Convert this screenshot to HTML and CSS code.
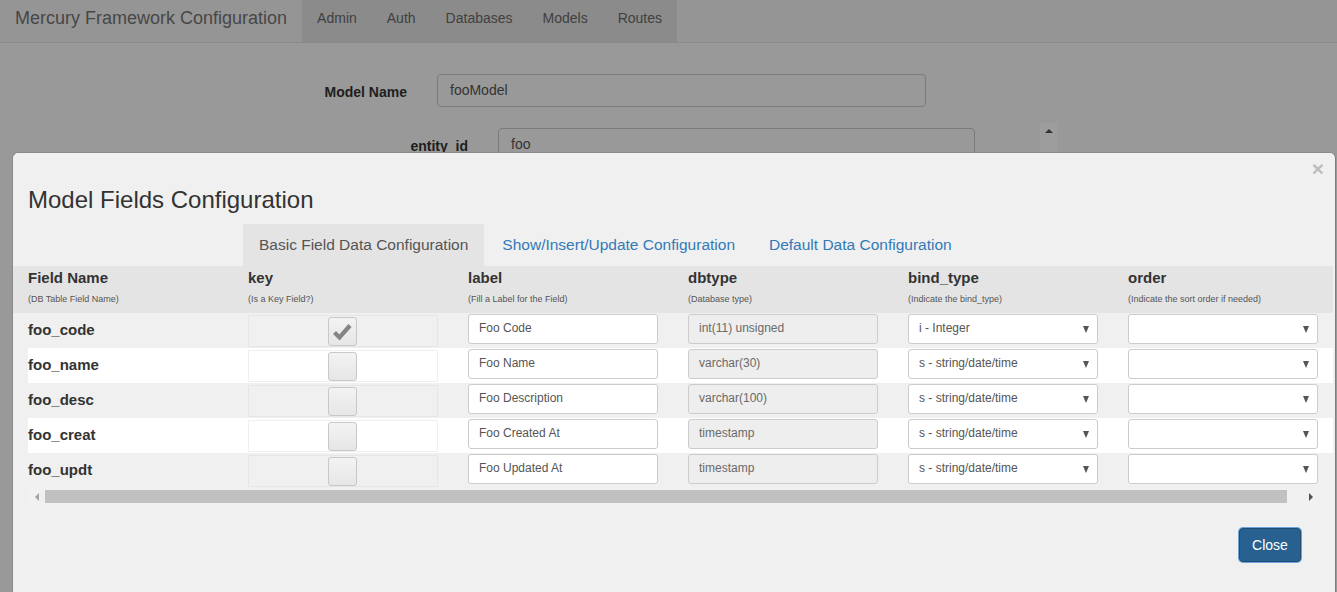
FILE: index.html
```html
<!DOCTYPE html>
<html lang="en">
<head>
<meta charset="utf-8">
<title>Mercury Framework Configuration</title>
<link rel="stylesheet" href="styles.css">
</head>
<body>
<nav class="navbar">
  <span class="brand">Mercury Framework Configuration</span>
  <ul class="nav">
    <li>Admin</li>
    <li>Auth</li>
    <li>Databases</li>
    <li>Models</li>
    <li>Routes</li>
  </ul>
</nav>

<main class="page">
  <div class="form-row row-model">
    <label class="form-label">Model Name</label>
    <div class="fake-input input-model">fooModel</div>
  </div>
  <div class="form-row row-entity">
    <label class="form-label">entity_id</label>
    <div class="fake-input input-entity">foo</div>
    <div class="vscroll"><span class="vs-arrow"></span></div>
  </div>
</main>

<div class="modal">
  <button class="close-x" type="button">×</button>
  <h4 class="modal-title">Model Fields Configuration</h4>
  <ul class="tabs">
    <li class="tab active">Basic Field Data Configuration</li>
    <li class="tab">Show/Insert/Update Configuration</li>
    <li class="tab">Default Data Configuration</li>
  </ul>

  <div class="grid-head">
    <div class="hcell first"><div class="htitle">Field Name</div><div class="hsub">(DB Table Field Name)</div></div>
    <div class="hcell"><div class="htitle">key</div><div class="hsub">(Is a Key Field?)</div></div>
    <div class="hcell"><div class="htitle">label</div><div class="hsub">(Fill a Label for the Field)</div></div>
    <div class="hcell"><div class="htitle">dbtype</div><div class="hsub">(Database type)</div></div>
    <div class="hcell"><div class="htitle">bind_type</div><div class="hsub">(Indicate the bind_type)</div></div>
    <div class="hcell"><div class="htitle">order</div><div class="hsub">(Indicate the sort order if needed)</div></div>
  </div>

  <div class="rows">
    <div class="row">
      <div class="cell first fname">foo_code</div>
      <div class="cell"><div class="keybox"><span class="check checked"><svg viewBox="0 0 29 29" width="29" height="29"><path d="M6.5 15.5 L11.5 20.5 L22 8.5" fill="none" stroke="#858585" stroke-width="4.2" stroke-linejoin="miter"/></svg></span></div></div>
      <div class="cell"><div class="ctl">Foo Code</div></div>
      <div class="cell"><div class="ctl disabled">int(11) unsigned</div></div>
      <div class="cell"><div class="ctl select">i - Integer<span class="caret"></span></div></div>
      <div class="cell"><div class="ctl select"><span class="caret"></span></div></div>
    </div>
    <div class="row even">
      <div class="cell first fname">foo_name</div>
      <div class="cell"><div class="keybox"><span class="check"></span></div></div>
      <div class="cell"><div class="ctl">Foo Name</div></div>
      <div class="cell"><div class="ctl disabled">varchar(30)</div></div>
      <div class="cell"><div class="ctl select">s - string/date/time<span class="caret"></span></div></div>
      <div class="cell"><div class="ctl select"><span class="caret"></span></div></div>
    </div>
    <div class="row">
      <div class="cell first fname">foo_desc</div>
      <div class="cell"><div class="keybox"><span class="check"></span></div></div>
      <div class="cell"><div class="ctl">Foo Description</div></div>
      <div class="cell"><div class="ctl disabled">varchar(100)</div></div>
      <div class="cell"><div class="ctl select">s - string/date/time<span class="caret"></span></div></div>
      <div class="cell"><div class="ctl select"><span class="caret"></span></div></div>
    </div>
    <div class="row even">
      <div class="cell first fname">foo_creat</div>
      <div class="cell"><div class="keybox"><span class="check"></span></div></div>
      <div class="cell"><div class="ctl">Foo Created At</div></div>
      <div class="cell"><div class="ctl disabled">timestamp</div></div>
      <div class="cell"><div class="ctl select">s - string/date/time<span class="caret"></span></div></div>
      <div class="cell"><div class="ctl select"><span class="caret"></span></div></div>
    </div>
    <div class="row">
      <div class="cell first fname">foo_updt</div>
      <div class="cell"><div class="keybox"><span class="check"></span></div></div>
      <div class="cell"><div class="ctl">Foo Updated At</div></div>
      <div class="cell"><div class="ctl disabled">timestamp</div></div>
      <div class="cell"><div class="ctl select">s - string/date/time<span class="caret"></span></div></div>
      <div class="cell"><div class="ctl select"><span class="caret"></span></div></div>
    </div>
  </div>

  <div class="hscroll">
    <span class="hs-btn"><span class="hs-left"></span></span>
    <span class="hs-thumb"></span>
    <span class="hs-rest"></span>
    <span class="hs-btn"><span class="hs-right"></span></span>
  </div>

  <div class="modal-footer">
    <button class="btn-close" type="button">Close</button>
  </div>
</div>
</body>
</html>
```

FILE: styles.css
```css
* { box-sizing: border-box; }

html, body {
  margin: 0;
  padding: 0;
  height: 100%;
  overflow: hidden;
}

body {
  background: #999999;
  font-family: "Liberation Sans", Arial, Helvetica, sans-serif;
  font-size: 14px;
  color: #1f1f1f;
}

/* ---------- dimmed background page ---------- */
.navbar {
  display: flex;
  align-items: stretch;
  height: 43px;
  background: #959595;
  border-bottom: 1px solid #8a8a8a;
}

.brand {
  padding: 0 15px;
  font-size: 18px;
  line-height: 36px;
  color: #474747;
}

.nav {
  list-style: none;
  margin: 0;
  padding: 0;
  display: flex;
  background: #8b8b8b;
}

.nav li {
  padding: 8px 15px 0;
  line-height: 20px;
  font-size: 14px;
  color: #404040;
}

.page {
  padding-top: 31px;
}

.form-row {
  display: flex;
  align-items: flex-start;
  gap: 30px;
}

.row-entity {
  margin-top: 21px;
}

.form-label {
  font-weight: bold;
  text-align: right;
  line-height: 33px;
  height: 33px;
  padding-top: 2px;
  color: #1e1e1e;
}

.row-model .form-label { width: 407px; }
.row-entity .form-label { width: 468px; }

.fake-input {
  height: 33px;
  border: 1px solid #7b7b7b;
  border-radius: 4px;
  padding: 0 12px;
  line-height: 31px;
  color: #333;
}

.input-model { width: 489px; }
.input-entity { width: 477px; }

.vscroll {
  margin-left: 35px;
  margin-top: -5px;
  width: 17px;
  height: 60px;
  background: #9d9d9d;
  display: flex;
  justify-content: center;
  padding-top: 6px;
}

.vs-arrow {
  width: 0;
  height: 0;
  border-left: 4px solid transparent;
  border-right: 4px solid transparent;
  border-bottom: 4px solid #333;
}

/* ---------- modal ---------- */
.modal {
  position: fixed;
  left: 12px;
  top: 152px;
  width: 1324px;
  height: 470px;
  background: #f0f0f0;
  border: 1px solid #8a8a8a;
  border-right-color: #7d7d7d;
  border-radius: 6px;
}

.close-x {
  position: absolute;
  right: 11px;
  top: 4px;
  background: none;
  border: 0;
  padding: 0;
  font-family: "Liberation Sans", Arial, sans-serif;
  font-size: 21px;
  font-weight: bold;
  line-height: 24px;
  color: #bdbdbd;
}

.modal-title {
  margin: 33px 0 0;
  padding-left: 15px;
  font-size: 24px;
  font-weight: normal;
  line-height: 28px;
  color: #333;
}

.tabs {
  list-style: none;
  margin: 10px 0 0 230px;
  padding: 0;
  display: flex;
}

.tab {
  padding: 10px 16px;
  margin-right: 2px;
  font-size: 15.5px;
  line-height: 22px;
  color: #337ab7;
}

.tab.active {
  background: #e4e4e4;
  color: #555;
}

.grid-head {
  display: grid;
  grid-template-columns: repeat(6, 220px);
  width: 1320px;
  background: #e4e4e4;
  padding: 2px 0 8px;
}

.hcell {
  padding: 0 15px;
}

.htitle {
  font-size: 15px;
  font-weight: bold;
  line-height: 20px;
  color: #333;
}

.hsub {
  margin-top: 5px;
  font-size: 9px;
  line-height: 12px;
  color: #555;
}

.rows {
  margin-left: 15px;
  width: 1305px;
}

.row {
  display: grid;
  grid-template-columns: 205px repeat(5, 220px);
  height: 35px;
  padding-top: 0;
}

.row.even {
  background: #ffffff;
}

.cell {
  padding: 0 15px;
}

.cell.first {
  padding-left: 0;
}

.fname {
  font-size: 15px;
  font-weight: bold;
  line-height: 33px;
  color: #333;
}

.keybox {
  margin-top: 2px;
  height: 32px;
  border: 1px solid #e6e6e6;
  background: #f0f0f0;
  display: flex;
  justify-content: center;
  padding-top: 1px;
}

.row.even .keybox {
  background: #ffffff;
  border-color: #efefef;
}

.check {
  display: block;
  width: 29px;
  height: 29px;
  border: 1px solid #c8c8c8;
  border-radius: 3px;
  background: linear-gradient(#f3f3f3, #e6e6e6);
  margin-left: -1px;
}

.check svg {
  display: block;
  margin: -1px 0 0 -1px;
}

.ctl {
  position: relative;
  margin-top: 1px;
  height: 30px;
  border: 1px solid #cccccc;
  border-radius: 3px;
  background: #ffffff;
  padding: 0 10px;
  font-size: 12px;
  line-height: 27px;
  color: #555;
  white-space: nowrap;
}

.ctl.disabled {
  background: #eeeeee;
  color: #6a6a6a;
}

.caret {
  position: absolute;
  right: 8px;
  top: 11px;
  width: 0;
  height: 0;
  border-left: 3px solid transparent;
  border-right: 3px solid transparent;
  border-top: 7px solid #555;
}

/* fake horizontal scrollbar */
.hscroll {
  display: flex;
  margin: 0 0 0 15px;
  width: 1291px;
  height: 17px;
  background: #f1f1f1;
}

.hs-btn {
  width: 17px;
  height: 17px;
  display: flex;
  align-items: center;
  justify-content: center;
}

.hs-left {
  width: 0;
  height: 0;
  border-top: 4px solid transparent;
  border-bottom: 4px solid transparent;
  border-right: 4px solid #a3a3a3;
}

.hs-right {
  width: 0;
  height: 0;
  border-top: 4px solid transparent;
  border-bottom: 4px solid transparent;
  border-left: 4px solid #505050;
}

.hs-thumb {
  width: 1242px;
  margin: 2px 0;
  background: #c1c1c1;
}

.hs-rest {
  flex: 1;
}

.modal-footer {
  display: flex;
  justify-content: flex-end;
  padding: 23px 34px 0 0;
}

.btn-close {
  width: 62px;
  height: 34px;
  background: #286090;
  border: 1px solid #204d74;
  border-radius: 4px;
  box-shadow: 0 0 0 1px #6fa1d6;
  font-family: "Liberation Sans", Arial, sans-serif;
  font-size: 14px;
  color: #ffffff;
  padding: 0;
}
```
